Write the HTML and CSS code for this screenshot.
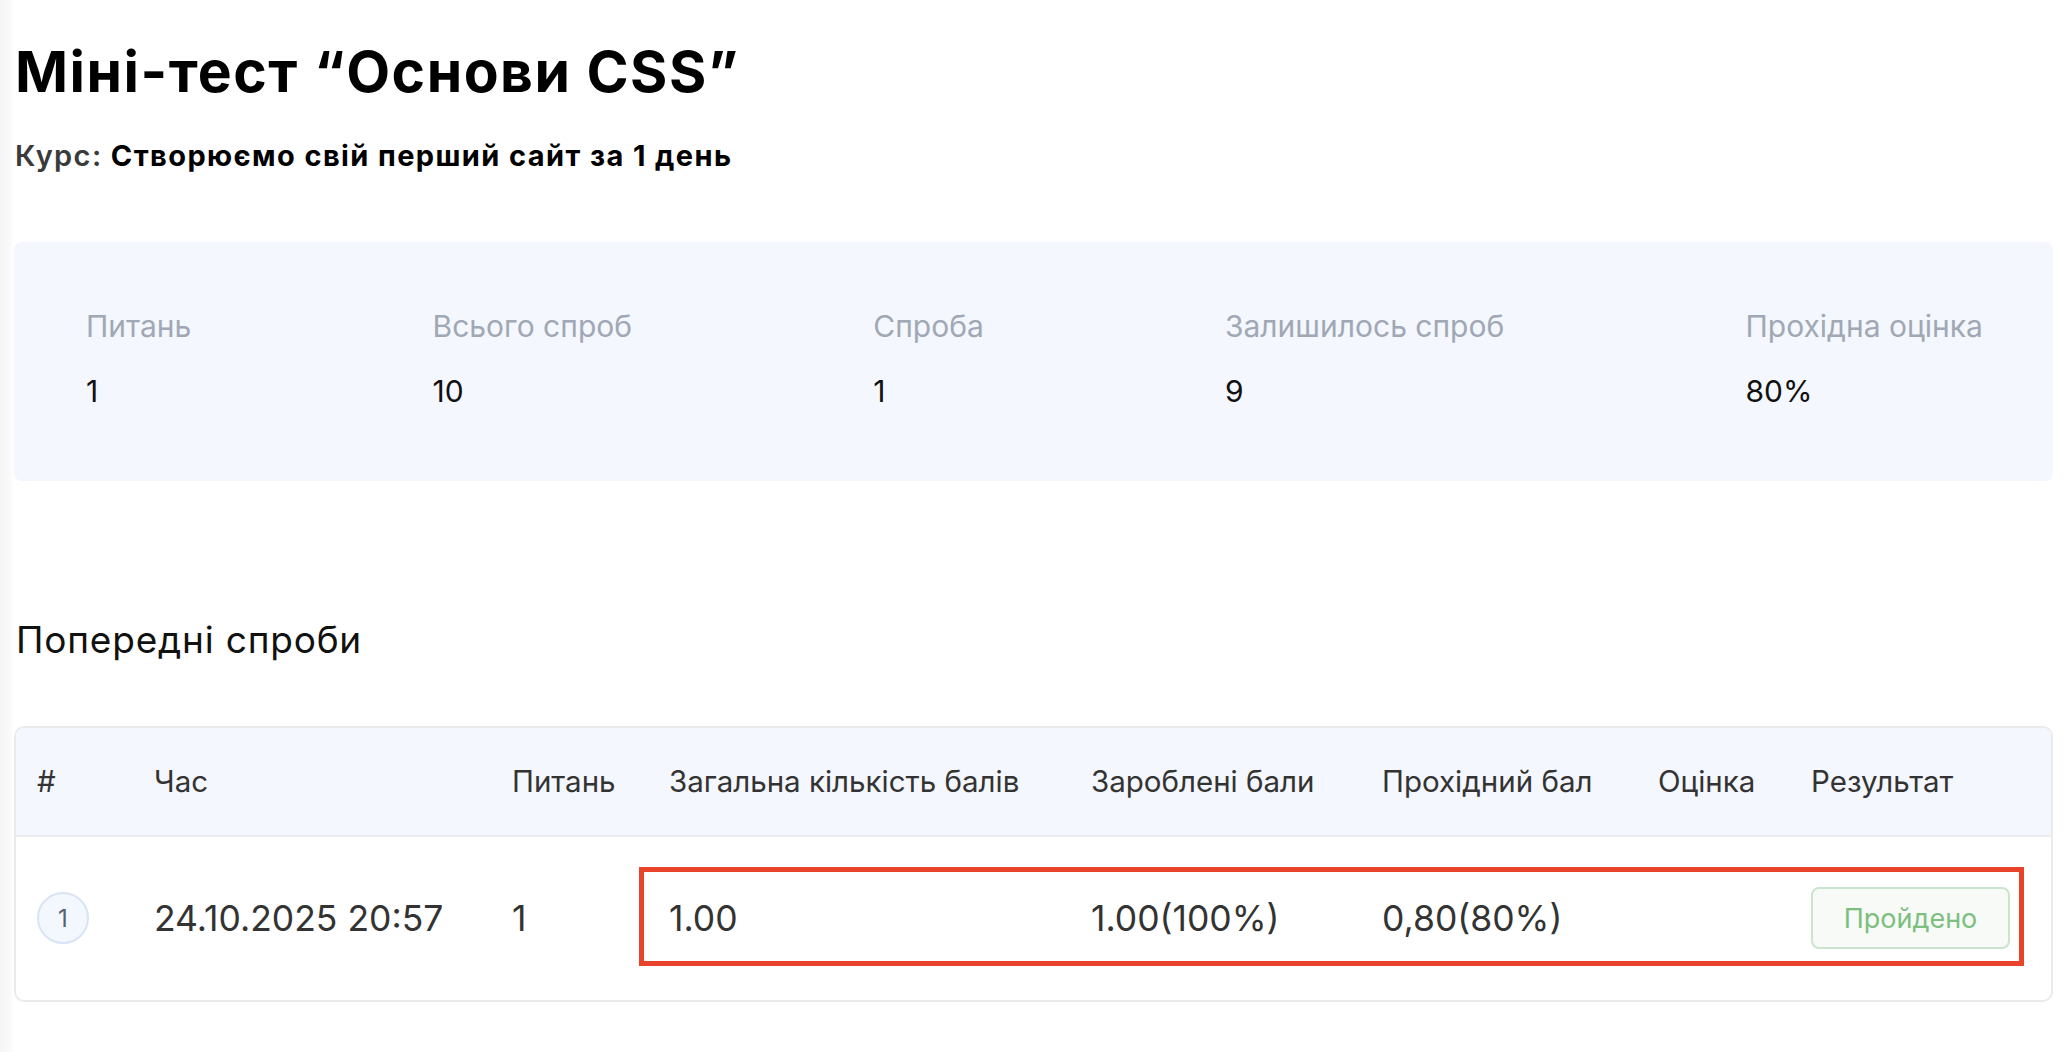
FILE: index.html
```html
<!DOCTYPE html>
<html lang="uk">
<head>
<meta charset="utf-8">
<title>Міні-тест “Основи CSS”</title>
<link rel="stylesheet" href="styles.css">
</head>
<body>
<main class="page">
  <h1 class="title">Міні-тест “Основи CSS”</h1>
  <p class="course"><span class="course-label">Курс:</span> Створюємо свій перший сайт за 1 день</p>

  <section class="stats">
    <div class="stat">
      <div class="stat-label">Питань</div>
      <div class="stat-value">1</div>
    </div>
    <div class="stat">
      <div class="stat-label">Всього спроб</div>
      <div class="stat-value">10</div>
    </div>
    <div class="stat">
      <div class="stat-label">Спроба</div>
      <div class="stat-value">1</div>
    </div>
    <div class="stat">
      <div class="stat-label">Залишилось спроб</div>
      <div class="stat-value">9</div>
    </div>
    <div class="stat">
      <div class="stat-label">Прохідна оцінка</div>
      <div class="stat-value">80%</div>
    </div>
  </section>

  <h2 class="section-title">Попередні спроби</h2>

  <div class="table-wrap">
    <table class="attempts">
      <colgroup>
        <col class="c-num">
        <col class="c-time">
        <col class="c-q">
        <col class="c-total">
        <col class="c-earned">
        <col class="c-pass">
        <col class="c-grade">
        <col class="c-result">
      </colgroup>
      <thead>
        <tr>
          <th>#</th>
          <th>Час</th>
          <th>Питань</th>
          <th>Загальна кількість балів</th>
          <th>Зароблені бали</th>
          <th>Прохідний бал</th>
          <th>Оцінка</th>
          <th>Результат</th>
        </tr>
      </thead>
      <tbody>
        <tr>
          <td><span class="num-circle">1</span></td>
          <td>24.10.2025 20:57</td>
          <td>1</td>
          <td>1.00</td>
          <td>1.00(100%)</td>
          <td>0,80(80%)</td>
          <td></td>
          <td><span class="badge-pass">Пройдено</span></td>
        </tr>
      </tbody>
    </table>
    <div class="highlight" aria-hidden="true"></div>
  </div>
</main>
</body>
</html>
```

FILE: styles.css
```css
* {
  box-sizing: border-box;
}

html, body {
  margin: 0;
  padding: 0;
}

body {
  font-family: "Inter", "Roboto", "DejaVu Sans", sans-serif;
  color: #111;
  background: linear-gradient(to right, #f5f5f5 0px, #fafafa 10px, #ffffff 14px);
  min-height: 1052px;
}

.page {
  padding: 38px 17px 40px 14px;
}

.title {
  margin: 0 0 0 1px;
  font-size: 57px;
  line-height: 1.2;
  font-weight: 700;
  color: #000;
  letter-spacing: 1.5px;
}

.course {
  margin: 33px 0 0 1px;
  font-size: 29px;
  line-height: 1.2;
  font-weight: 700;
  color: #000;
  letter-spacing: 1.4px;
}

.course-label {
  color: #3a3a3a;
  font-weight: 600;
}

.stats {
  margin-top: 68px;
  background: #f4f7fd;
  border-radius: 8px;
  height: 239px;
  padding: 66px 70px 0 72px;
  display: flex;
  justify-content: space-between;
  align-items: flex-start;
}

.stat-label {
  font-size: 30px;
  line-height: 1.2;
  color: #a1a8b5;
  font-weight: 400;
}

.stat-value {
  margin-top: 29px;
  font-size: 30px;
  line-height: 1.2;
  color: #111;
  font-weight: 400;
}

.section-title {
  margin: 137px 0 0 2px;
  font-size: 37px;
  line-height: 1.2;
  font-weight: 400;
  color: #111;
  letter-spacing: 0.8px;
}

.table-wrap {
  position: relative;
  margin-top: 63px;
  border: 2px solid #ebebeb;
  border-radius: 10px;
  overflow: hidden;
}

.attempts {
  width: 100%;
  border-collapse: collapse;
  table-layout: fixed;
}

.c-num { width: 117px; }
.c-time { width: 358px; }
.c-q { width: 157px; }
.c-total { width: 422px; }
.c-earned { width: 291px; }
.c-pass { width: 276px; }
.c-grade { width: 153px; }

.attempts th {
  height: 108px;
  background: #f4f7fd;
  border-bottom: 2px solid #ececec;
  text-align: left;
  font-weight: 400;
  font-size: 29.5px;
  color: #333;
  padding: 0 0 0 21px;
  white-space: nowrap;
  vertical-align: middle;
}

.attempts td {
  height: 164px;
  padding: 0 0 0 21px;
  font-size: 35.5px;
  color: #333;
  vertical-align: middle;
  white-space: nowrap;
}

.num-circle {
  display: inline-flex;
  align-items: center;
  justify-content: center;
  width: 52px;
  height: 52px;
  border-radius: 50%;
  border: 2px solid #d8e4f6;
  background: #f3f7fe;
  color: #566070;
  font-size: 24px;
}

.badge-pass {
  display: inline-flex;
  align-items: center;
  justify-content: center;
  width: 199px;
  height: 62px;
  border: 2px solid #cbe5cd;
  border-radius: 8px;
  background: #f7faf6;
  color: #7cbf80;
  font-size: 27px;
}

.highlight {
  position: absolute;
  left: 623px;
  top: 139px;
  width: 1385px;
  height: 99px;
  border: 5px solid #e8432b;
  pointer-events: none;
}
```
